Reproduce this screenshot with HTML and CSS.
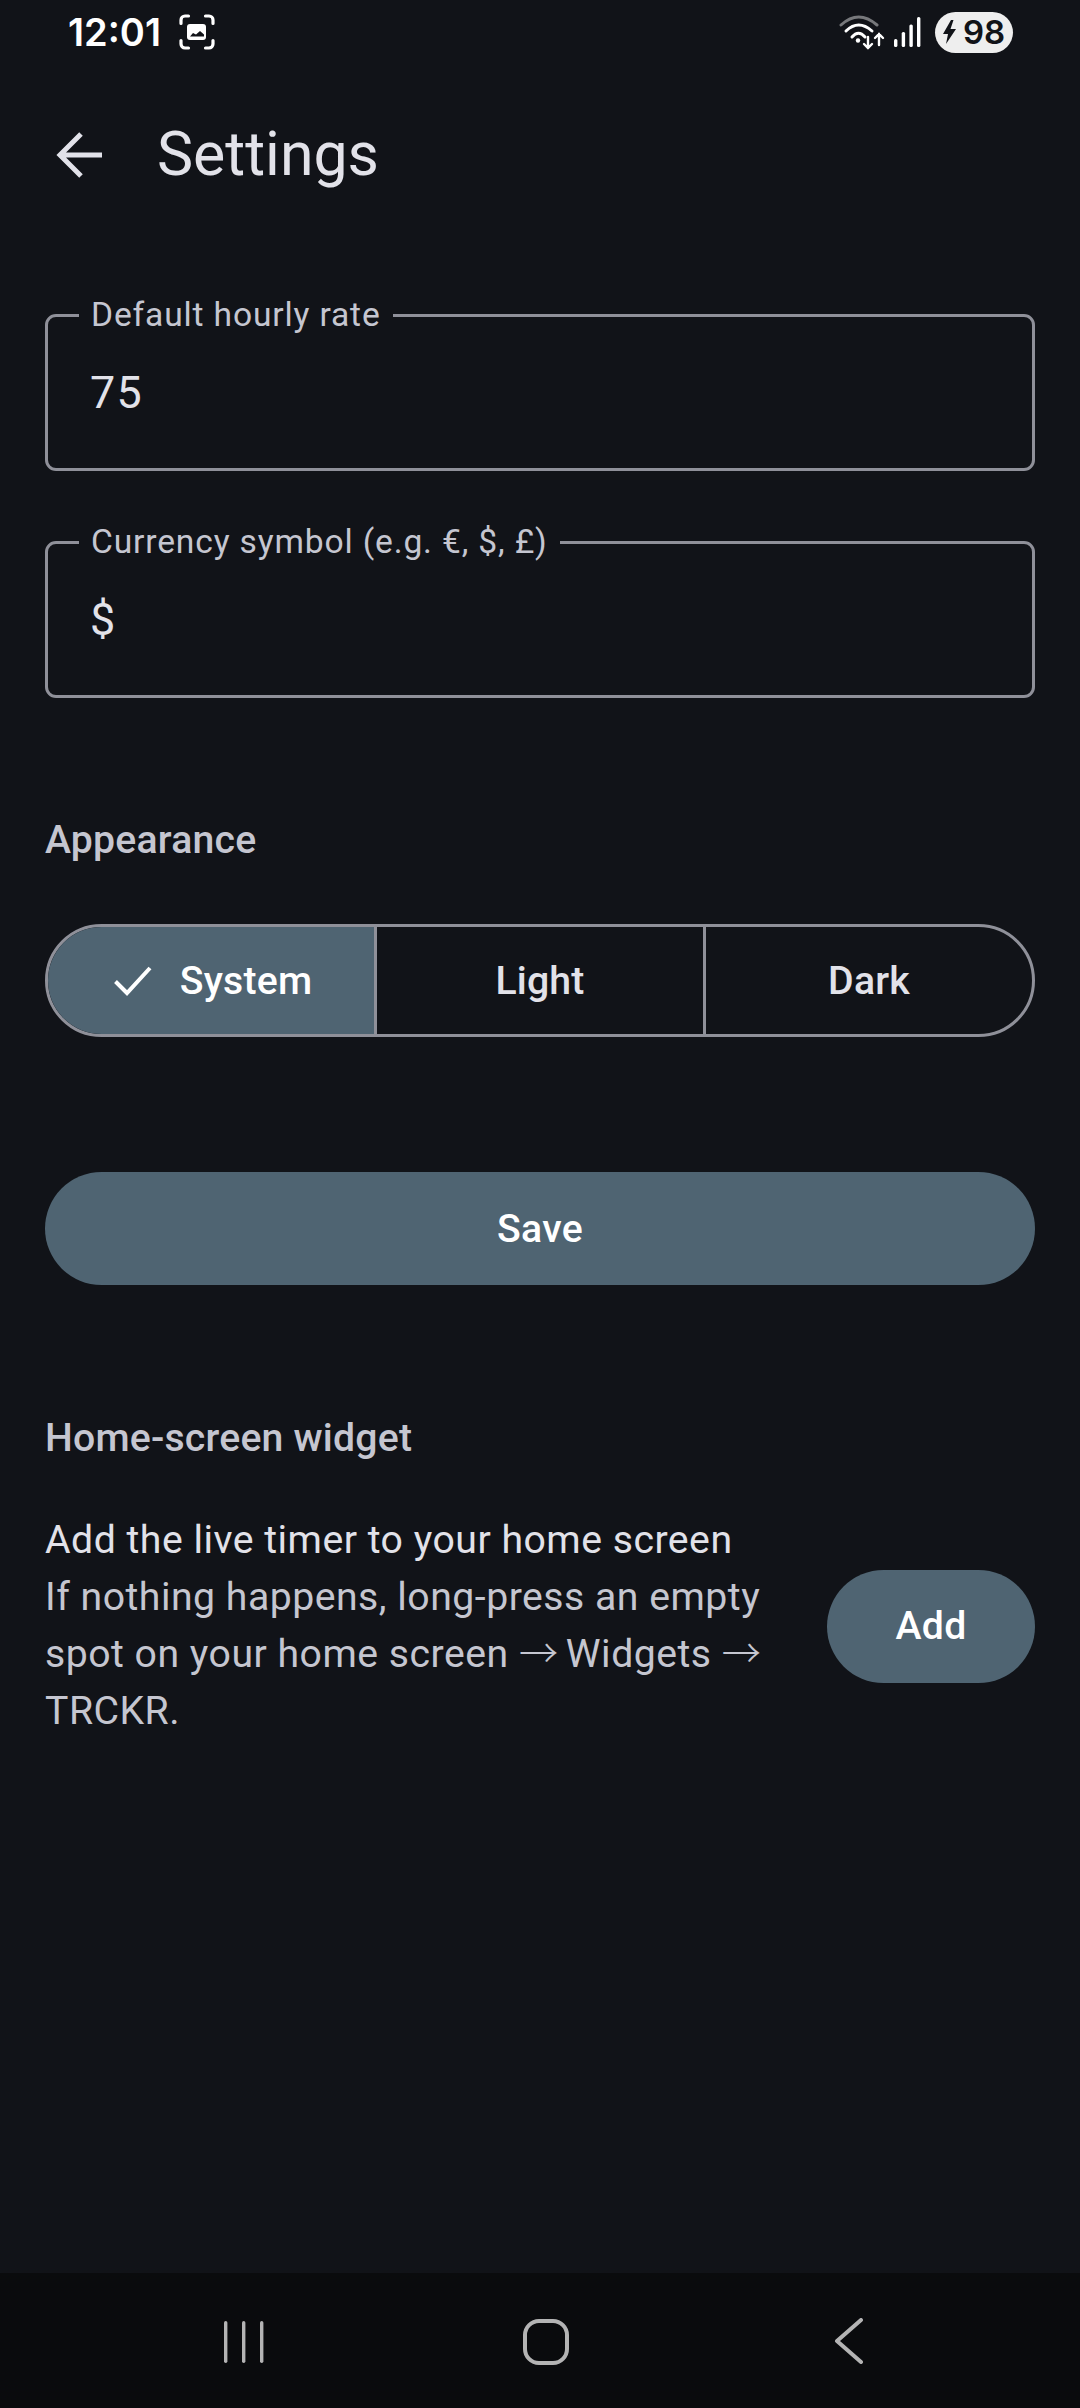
FILE: index.html
```html
<!DOCTYPE html>
<html lang="en">
<head>
<meta charset="utf-8">
<title>Settings</title>
<link rel="stylesheet" href="styles.css">
</head>
<body>
<div class="screen">
  <div class="status">
    <div class="status-left">
      <span class="time">12:01</span>
      <svg class="scan" viewBox="0 0 36 36" width="36" height="36" fill="none" stroke="#fff" stroke-width="3.200" stroke-linecap="round">
        <path d="M2 9.500V6a4 4 0 0 1 4-4h3.500M26.500 2H30a4 4 0 0 1 4 4v3.500M34 26.500V30a4 4 0 0 1-4 4h-3.500M9.500 34H6a4 4 0 0 1-4-4v-3.500"/>
        <rect x="8" y="10" width="19" height="16" rx="3" fill="#fff" stroke="none"/>
        <path d="M11 22.500l3-3.500 3 1.500 4-3.500 4 3.500v2z" fill="#111318" stroke="none"/>
      </svg>
    </div>
    <div class="status-right">
      <svg class="wifi" viewBox="0 0 46 36" width="46" height="36" fill="none" stroke-linecap="round">
        <path d="M2 11Q19.500-5 38 11" stroke="#77787b" stroke-width="3"/>
        <path d="M7 17Q19.500 5 33 17" stroke="#fff" stroke-width="3"/>
        <path d="M13 23Q19.500 15.500 26 23" stroke="#fff" stroke-width="3"/>
        <circle cx="19" cy="26.500" r="2.200" fill="#fff"/>
        <path d="M29 23v11M25 30l4 4 4-4M40 31V20M36 24l4-4 4 4" stroke="#fff" stroke-width="2.400"/>
      </svg>
      <svg class="signal" viewBox="0 0 27 30" width="27" height="30" fill="#fff">
        <rect x="0" y="22" width="3.400" height="8" rx="1.500"/>
        <rect x="7.700" y="15" width="3.400" height="15" rx="1.500"/>
        <rect x="15.400" y="7.500" width="3.400" height="22.500" rx="1.500"/>
        <rect x="23" y="0" width="3.400" height="30" rx="1.500"/>
      </svg>
      <div class="battery">
        <svg class="bolt" viewBox="0 0 14 24" width="14" height="24" fill="#111318"><path d="M8 0 0 14h5l-2 10 10-15H7.500l3-9z"/></svg>
        <span class="battery-num">98</span>
      </div>
    </div>
  </div>

  <header class="topbar">
    <svg class="back" viewBox="0 0 46 46" width="46" height="46" fill="none" stroke="#e2e2e9" stroke-width="5">
      <path d="M46 23H4M25 2 4 23l21 21"/>
    </svg>
    <h1 class="title">Settings</h1>
  </header>

  <main class="content">
    <fieldset class="field">
      <legend class="field-label">Default hourly rate</legend>
      <div class="field-value">75</div>
    </fieldset>
    <fieldset class="field field-second">
      <legend class="field-label">Currency symbol (e.g. €, $, £)</legend>
      <div class="field-value">$</div>
    </fieldset>

    <h2 class="section appearance">Appearance</h2>
    <div class="segments">
      <div class="segment segment-on">
        <svg class="check" viewBox="0 0 38 30" width="38" height="30" fill="none" stroke="#fff" stroke-width="4"><path d="M1.500 15.500 13 27 36 2"/></svg>
        <span>System</span>
      </div>
      <div class="segment">Light</div>
      <div class="segment">Dark</div>
    </div>

    <div class="btn save">Save</div>

    <h2 class="section widget">Home-screen widget</h2>
    <div class="widget-row">
      <div class="widget-text">
        <div class="widget-main">Add the live timer to your home screen</div>
        <div class="widget-sub">If nothing happens, long-press an empty</div>
        <div class="widget-sub">spot on your home screen <span class="arrow">→</span> Widgets <span class="arrow">→</span></div>
        <div class="widget-sub">TRCKR.</div>
      </div>
      <div class="btn add">Add</div>
    </div>
  </main>

  <nav class="navbar">
    <svg class="nav-recent" viewBox="0 0 40 44" width="40" height="44" fill="#b4b4b4">
      <rect x="0" y="1" width="3.400" height="42" rx="1.700"/>
      <rect x="18" y="1" width="3.400" height="42" rx="1.700"/>
      <rect x="36" y="1" width="3.400" height="42" rx="1.700"/>
    </svg>
    <svg class="nav-home" viewBox="0 0 48 48" width="48" height="48" fill="none" stroke="#b4b4b4" stroke-width="4">
      <rect x="3" y="3" width="42" height="42" rx="14"/>
    </svg>
    <svg class="nav-back" viewBox="0 0 30 46" width="30" height="46" fill="none" stroke="#b4b4b4" stroke-width="4" stroke-linecap="round" stroke-linejoin="round">
      <path d="M27 2 3 23l24 21"/>
    </svg>
  </nav>
</div>
</body>
</html>
```
FILE: styles.css
```css
* { box-sizing: border-box; }
html, body { margin: 0; padding: 0; }
body { background: #111318; font-family: Roboto, "Liberation Sans", sans-serif; color: #e2e2e9; }

.screen { width: 1080px; height: 2408px; display: flex; flex-direction: column; background: #111318; }

.status { height: 70px; flex: none; display: flex; justify-content: space-between; align-items: center; padding: 0 67px 6px 68px; }
.status-left { display: flex; align-items: center; gap: 18px; }
.time { font-family: Inter, Roboto, sans-serif; font-size: 38px; font-weight: 600; color: #fff; line-height: 1; }
.status-right { display: flex; align-items: center; }
.wifi { margin-right: 9px; }
.signal { margin-right: 14px; }
.battery { width: 78px; height: 41px; border-radius: 21px; background: #eeeeee; display: flex; align-items: center; justify-content: center; gap: 6px; color: #111318; }
.battery-num { font-family: Inter, Roboto, sans-serif; font-size: 33px; font-weight: 600; line-height: 1; }

.topbar { height: 170px; flex: none; display: flex; align-items: center; padding: 0 0 0 56px; }
.back { margin-top: -1px; }
.title { margin: 0 0 0 55px; font-size: 60.800px; font-weight: 400; line-height: 1; color: #e2e2e9; }

.content { flex: 1; padding: 55px 45px 0; }

.field { display: block; margin: 0; height: 176px; padding: 0; border: 3px solid #8f9099; border-radius: 11px; min-width: 0; }
.field-second { margin-top: 51px; }
.field-label { margin-left: 31px; padding: 0 12px; font-size: 33.600px; line-height: 40px; letter-spacing: 0.850px; color: #c5c6d0; }
.field-value { margin-top: 25px; padding-left: 42px; font-size: 44.800px; line-height: 66px; letter-spacing: 1.400px; color: #e2e2e9; }

.section { margin: 0; font-size: 39.200px; font-weight: 500; line-height: 56px; letter-spacing: 0.200px; color: #c5c6d0; }
.appearance { margin-top: 114px; }

.segments { margin-top: 56px; height: 113px; display: flex; border: 3px solid #8f9099; border-radius: 57px; overflow: hidden; }
.segment { flex: 1; display: flex; align-items: center; justify-content: center; gap: 28px; font-size: 39.200px; font-weight: 500; letter-spacing: 0.200px; color: #e2e2e9; border-left: 3px solid #8f9099; }
.segment-on { background: #4f6472; color: #fff; border-left: 0; }
.check { margin-left: 4px; }

.btn { display: flex; align-items: center; justify-content: center; height: 113px; background: #4f6472; color: #fff; border-radius: 57px; font-size: 39.200px; font-weight: 500; letter-spacing: 0.280px; }
.save { margin-top: 135px; }

.widget { margin-top: 125px; }
.widget-row { margin-top: 46px; display: flex; align-items: center; gap: 40px; }
.widget-text { flex: 1; font-size: 39.200px; line-height: 57px; letter-spacing: 0.500px; }
.widget-main { color: #e2e2e9; }
.widget-sub { color: #c5c6d0; }
.arrow { font-family: "Noto Sans CJK SC", Roboto, sans-serif; font-weight: 300; line-height: 1; letter-spacing: -2.500px; }
.add { flex: none; width: 208px; }

.navbar { position: relative; height: 135px; flex: none; background: #0a0b0d; }
.nav-recent { position: absolute; left: 224px; top: 47px; }
.nav-home { position: absolute; left: 522px; top: 45px; }
.nav-back { position: absolute; left: 834px; top: 45px; }
```
